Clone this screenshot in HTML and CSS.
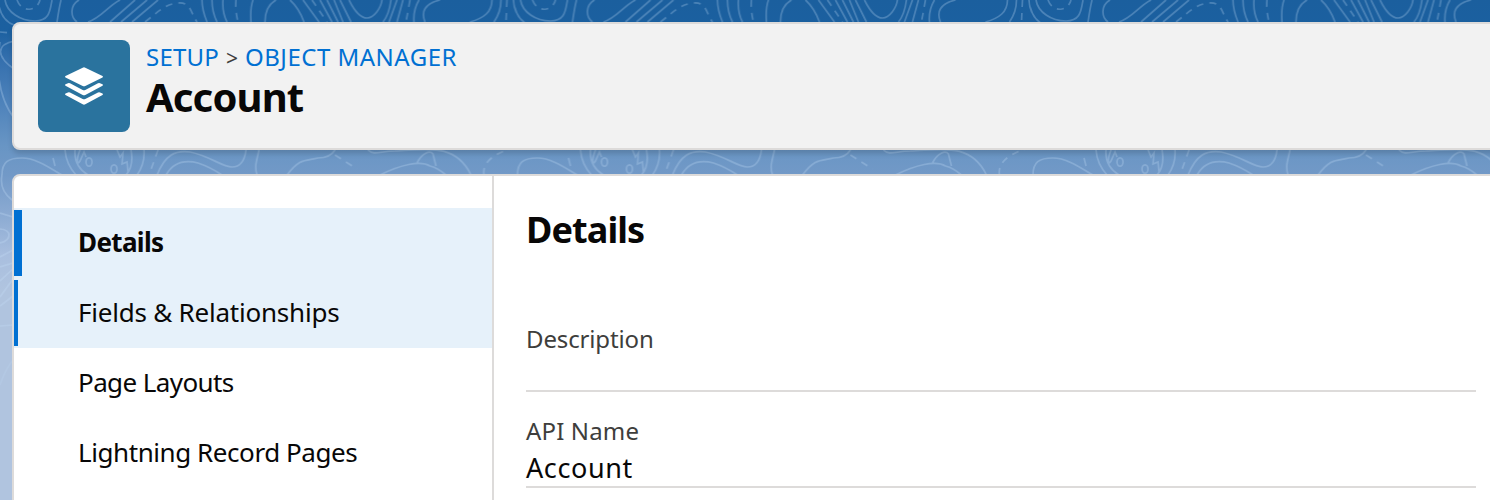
FILE: index.html
```html
<!DOCTYPE html>
<html lang="en">
<head>
<meta charset="utf-8">
<title>Account | Object Manager</title>
<link rel="stylesheet" href="styles.css">
</head>
<body>
<svg class="backdrop" width="1490" height="500" aria-hidden="true">
  <defs>
    <pattern id="topo" width="515.5" height="500" patternUnits="userSpaceOnUse">
      <g fill="none" stroke="#c4dcf6" stroke-opacity=".28" stroke-width="1.7">
        <path d="M5 0C7 12 20 21 35 21S50 10 52 0M-2 0Q0 20 14 25M61 0Q59 8 57 22M79 0C70 5 70 17 77 22M120 0C108 6 101 18 88 22M135 0L110 22M147 0L121 22M158 0L132 22M202 0Q202 10 207 22M212 0Q212 12 217 22M223 0Q222 12 227 22M253 0Q250 8 251 22M276 0Q265 6 265 22M290 0Q299 8 304 22M303 0L319 22M320 0L332 22M327 0L338 22M334 0L343 22M340 0L351 22M349 0C354 10 360 18 367 18S381 8 382 0M391 0Q389 15 383 22M397 0L389 22M403 0L397 22M419 0Q413 10 414 22M440 0C424 4 421 12 425 22M492 0C492 12 484 18 470 22M501 0Q501 12 494 22M513.500 0Q514 14 524 22"/>
        <path stroke-dasharray="7 6" d="M17 0C20 8 26 10 31 9S39 4 40 0M145 22C158 12 165 4 178 3S190 12 197 22M236 0Q235 10 238 22M312 0L327 22M410 0L406 22M507 0L506 22M335 155L357 169M484 175C482 162 494 154 510 149M158 150L149 175M0 32L13 33"/>
        <path d="M14 41C-4 45-4 56 14 69M0 42Q-7 90 14 118M2 175C2 162 8 158 22 158S50 168 62 175M53 158L55 166M65 150Q66 164 76 175M75 150C74 162 80 170 88 175M80 150C76 160 77 166 80 161L84 152 86 157M117 150L120 157 123 153 122 164 127 162 128 172M131 150Q134 166 126 175M144 150Q145 164 137 175M157 175C165 155 175 150 190 152C210 156 222 167 232 167S245 158 246 150M166 175C174 161 186 160 198 163Q210 167 222 175M259 150C257 160 254 166 257 175M287 175C300 158 305 161 318 158Q330 158 335 150M368 150C374 156 380 151 395 151C425 150 455 142 471 175M380 175C400 165 420 160 430 166Q438 168 446 175M417 163C422 153 430 150 433 154L436 166"/>
        <ellipse cx="89" cy="162" rx="3" ry="4.200"/><ellipse cx="114" cy="169" rx="3" ry="4.200"/>
        <path d="M2 175Q-1 190 12 200M0 213L13 217M0 229C12 230 12 240 0 243M0 257L13 250M0 267L13 263M0 281L14 268M0 297L13 279M0 306L13 296M0 326L13 325"/>
        <path stroke-opacity=".15" d="M0 385Q5 370 13 360"/>
      </g>
    </pattern>
  </defs>
  <rect width="1490" height="500" fill="url(#topo)"/>
</svg>
<main class="page">
  <header class="header">
    <div class="object-icon">
      <svg width="40" height="39" viewBox="0 0 40 39" fill="#fff">
        <path d="M18.700.700Q20 0 21.300.700L38.500 9Q39.500 9.700 38.500 10.400L21.300 19Q20 19.700 18.700 19L1.500 10.400Q.500 9.700 1.500 9Z"/>
        <path d="M1.500 17.300L4 16.200Q5 15.800 6 16.300L18.700 22.900Q20 23.500 21.300 22.900L34 16.300Q35 15.800 36 16.200L38.500 17.300Q39.500 18 38.500 18.800L21.300 28Q20 28.700 18.700 28L1.500 18.800Q.500 18 1.500 17.300Z"/>
        <path d="M1.500 26.600L4 25.500Q5 25.100 6 25.600L18.700 32Q20 32.600 21.300 32L34 25.600Q35 25.100 36 25.500L38.500 26.600Q39.500 27.300 38.500 28.100L21.300 37.300Q20 38 18.700 37.300L1.500 28.100Q.500 27.300 1.500 26.600Z"/>
      </svg>
    </div>
    <div class="heading">
      <nav class="crumbs"><a class="crumb-setup">SETUP</a><span class="sep">&gt;</span><a class="crumb-manager">OBJECT MANAGER</a></nav>
      <h1 class="title">Account</h1>
    </div>
  </header>
  <section class="panel">
    <nav class="sidebar">
      <a class="item active"><span class="t-details">Details</span></a>
      <a class="item hover"><span class="t-fields">Fields &amp; Relationships</span></a>
      <a class="item"><span class="t-layouts">Page Layouts</span></a>
      <a class="item"><span class="t-lightning">Lightning Record Pages</span></a>
    </nav>
    <div class="content">
      <h2 class="section-title">Details</h2>
      <div class="field description"><div class="label l-desc">Description</div></div>
      <div class="field api"><div class="label l-api">API Name</div><div class="value">Account</div></div>
    </div>
  </section>
</main>
</body>
</html>
```

FILE: styles.css
```css
* { box-sizing: border-box; }
body {
  margin: 0;
  height: 500px;
  overflow: hidden;
  font-family: "Noto Sans", "Open Sans", sans-serif;
  color: #080707;
  background: linear-gradient(#1b5f9e 0, #1b60a0 30px, #3570ae 60px, #4c81ba 100px, #6895c4 145px, #7299c7 175px, #8fadd4 220px, #a9bfdf 255px, #b0c4df 290px);
}
.backdrop { position: absolute; top: 0; left: 0; }
.page { position: relative; height: 500px; padding: 22px 0 0 12px; overflow: hidden; }
.header {
  display: flex;
  gap: 16px;
  width: 1500px;
  height: 128px;
  padding: 16px 24px;
  border: 2px solid #dddbda;
  border-radius: 8px;
  background: #f2f2f2;
  box-shadow: 0 4px 5px rgba(0, 0, 0, .14);
}
.object-icon {
  display: flex;
  align-items: center;
  justify-content: center;
  width: 92px;
  height: 92px;
  border-radius: 8px;
  background: #2a739e;
}
.crumbs { display: flex; height: 36px; font-size: 24px; line-height: 34px; white-space: nowrap; }
.crumbs a { color: #0070d2; }
.crumb-setup { width: 80px; letter-spacing: .2px; }
.crumb-manager { letter-spacing: .5px; }
.sep { width: 19px; font-size: 21px; line-height: 36px; color: #3e3e3c; }
.title { margin: 0; font-size: 40px; line-height: 42px; font-weight: 700; letter-spacing: -.85px; }
.panel {
  display: flex;
  width: 1500px;
  height: 400px;
  margin-top: 24px;
  border: 2px solid #dddbda;
  border-radius: 8px;
  background: #fff;
  overflow: hidden;
}
.sidebar { width: 480px; padding-top: 32px; border-right: 2px solid #dddbda; }
.item {
  display: flex;
  align-items: center;
  height: 70px;
  padding: 0 0 2px 64px;
  font-size: 26px;
  white-space: nowrap;
  background: linear-gradient(#0070d2, #0070d2) 0 2px / 0 66px no-repeat;
}
.active, .hover { background-color: #e6f1fa; }
.active { background-size: 8px 66px; font-weight: 700; }
.hover { background-size: 4px 66px; }
.t-details { letter-spacing: -.65px; }
.t-fields { letter-spacing: -.22px; }
.t-layouts { letter-spacing: -.6px; }
.t-lightning { letter-spacing: -.43px; }
.content { width: 982px; padding: 28px 0 0 32px; }
.section-title { margin: 0; height: 50px; font-size: 36px; line-height: 51px; font-weight: 700; letter-spacing: -.9px; }
.field { width: 950px; border-bottom: 2px solid #dddbda; }
.description { height: 90px; margin-top: 48px; padding-top: 20px; }
.api { height: 96px; padding-top: 22px; }
.label { height: 36px; font-size: 24px; line-height: 34px; color: #3e3e3c; }
.l-desc { letter-spacing: -.14px; }
.l-api { letter-spacing: .15px; }
.value { font-size: 27px; line-height: 35px; letter-spacing: .6px; color: #080707; }
```
